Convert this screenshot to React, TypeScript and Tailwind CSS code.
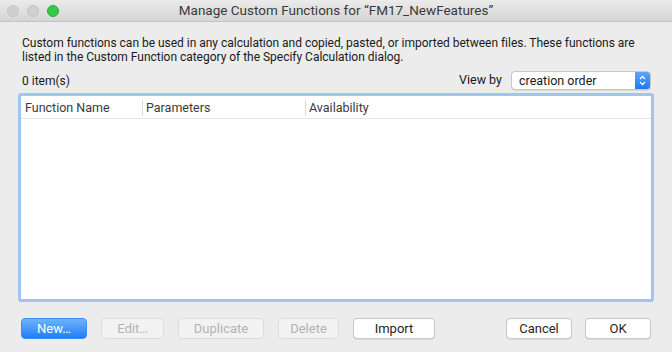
import React from "react";

const font = { fontFamily: "Roboto, 'Liberation Sans', sans-serif" };

function Btn({ label, w, kind }: { label: string; w: string; kind?: "primary" | "disabled" }) {
  const base = `${w} h-[21px] rounded-[4px] text-[13px] leading-[19px] flex items-center justify-center`;
  if (kind === "primary")
    return (
      <div className={`${base} bg-gradient-to-b from-[#6cb3fa] to-[#1b7ef8] border border-[#3d8ef5] text-white`}>{label}</div>
    );
  if (kind === "disabled")
    return (
      <div className={`${base} bg-[#f2f2f2] border border-[#dcdcdc] text-[#b3b3b3]`}>{label}</div>
    );
  return (
    <div className={`${base} bg-white border border-[#c8c8c8] shadow-[0_0.5px_0.5px_rgba(0,0,0,0.15)] text-[#262626]`}>{label}</div>
  );
}

export default function App() {
  return (
    <div className="w-[672px] h-[352px] bg-[#ececec] flex flex-col overflow-hidden" style={font}>
      {/* title bar */}
      <div className="h-[22px] bg-gradient-to-b from-[#ebebeb] to-[#d5d5d5] border-b border-[#c2c2c2] flex items-center relative shrink-0">
        <div className="flex items-center gap-[8px] pl-[7px]">
          <div className="w-[12px] h-[12px] rounded-full bg-[#d0d0d0] border border-[#c3c3c3]" />
          <div className="w-[12px] h-[12px] rounded-full bg-[#d0d0d0] border border-[#c3c3c3]" />
          <div className="w-[12px] h-[12px] rounded-full bg-[#35c94a] border border-[#2aac3c]" />
        </div>
        <div className="absolute inset-0 flex items-center justify-center text-[13.5px] text-[#3a3a3a]">
          Manage Custom Functions for “FM17_NewFeatures”
        </div>
      </div>

      <div className="flex flex-col px-[18px] pt-[15px]">
        <p className="px-[4px] text-[12px] leading-[13.5px] tracking-[-0.02px] text-[#1a1a1a] whitespace-nowrap">
          Custom functions can be used in any calculation and copied, pasted, or imported between files. These functions are
          <br />
          listed in the Custom Function category of the Specify Calculation dialog.
        </p>
        <div className="flex items-center justify-between mt-[7px] pl-[4px] pr-[3px]">
          <span className="text-[12px] text-[#1a1a1a] mt-[1px]">0 item(s)</span>
          <div className="flex items-center gap-[9px]">
            <span className="text-[12.5px] text-[#1a1a1a]">View by</span>
            <div className="w-[140px] h-[19px] bg-white rounded-[4px] border border-[#c8c8c8] shadow-[0_0.5px_0.5px_rgba(0,0,0,0.15)] flex items-stretch overflow-hidden">
              <span className="flex-1 pl-[7px] text-[12.5px] leading-[17px] text-[#1a1a1a]">creation order</span>
              <div className="w-[15px] bg-gradient-to-b from-[#5aa6fb] to-[#1b78f6] flex items-center justify-center">
                <svg width="9" height="13" viewBox="0 0 9 13">
                  <path d="M2 5 L4.5 2.5 L7 5" stroke="white" strokeWidth="1.3" fill="none" />
                  <path d="M2 8 L4.5 10.5 L7 8" stroke="white" strokeWidth="1.3" fill="none" />
                </svg>
              </div>
            </div>
          </div>
        </div>

        {/* table */}
        <div className="mt-[3px] h-[209px] rounded-[3px] border-[3px] border-[#a4c4ef] bg-white flex flex-col">
          <div className="h-[23px] border-b border-[#e6e6e6] flex items-center text-[12.5px] text-[#3a3a3a] shrink-0 pt-[2px]">
            <div className="w-[122px] pl-[4px] border-r border-[#dcdcdc] h-[16px] flex items-center">Function Name</div>
            <div className="w-[163px] pl-[3px] border-r border-[#dcdcdc] h-[16px] flex items-center">Parameters</div>
            <div className="pl-[3px]">Availability</div>
          </div>
          <div className="flex-1" />
        </div>

        {/* buttons */}
        <div className="flex items-center mt-[16px] pl-[3px] pr-[3px]">
          <div className="flex items-center gap-[14px]">
            <Btn label="New…" w="w-[66px]" kind="primary" />
            <Btn label="Edit…" w="w-[63px]" kind="disabled" />
            <Btn label="Duplicate" w="w-[86px]" kind="disabled" />
            <Btn label="Delete" w="w-[61px]" kind="disabled" />
            <Btn label="Import" w="w-[82px]" />
          </div>
          <div className="flex-1" />
          <div className="flex items-center gap-[13px]">
            <Btn label="Cancel" w="w-[66px]" />
            <Btn label="OK" w="w-[66px]" />
          </div>
        </div>
      </div>
    </div>
  );
}
